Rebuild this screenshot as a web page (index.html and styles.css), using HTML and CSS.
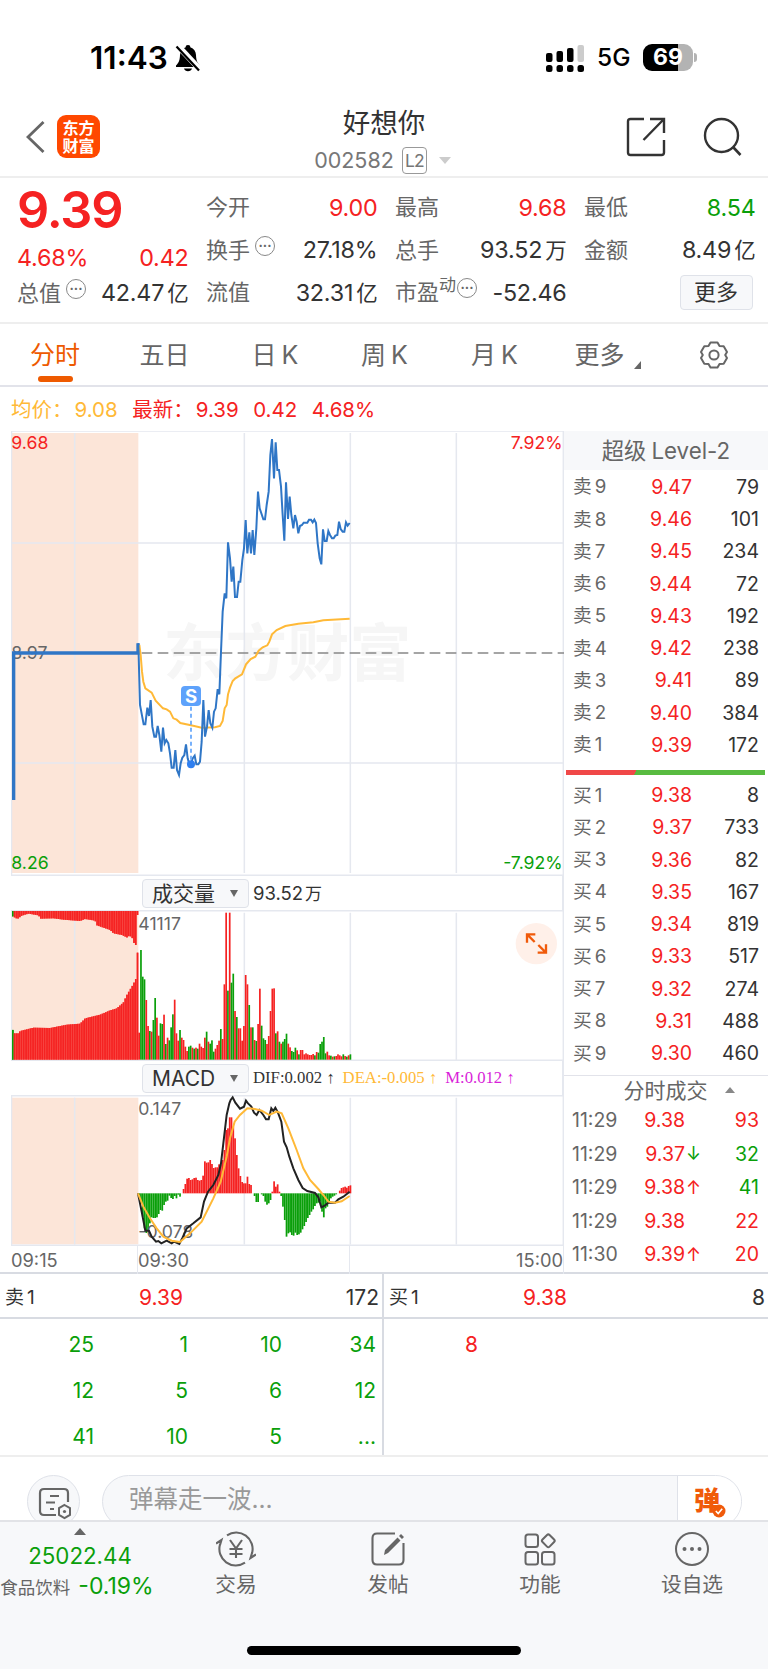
FILE: index.html
```html
<!DOCTYPE html>
<html lang="zh-CN">
<head>
	<meta charset="UTF-8">
	<title>好想你 002582</title>
	<link rel="stylesheet" href="styles.css">
</head>
<body>
	<!-- 状态栏 -->
	<div class="status">
		<b class="time">11:43</b>
		<svg class="bell" width="26" height="28" viewBox="0 0 26 28">
			<path d="M13 1c-1.600 0-2.300.9-2.300 2.200C7 4.300 5.200 7.200 5 11c-.2 5-1 7.500-4 10.500V23h24v-1.500c-3-3-3.800-5.500-4-10.500-.2-3.800-2-6.700-5.700-7.800C15.300 1.900 14.600 1 13 1zM9 24.500c.6 1.700 2 2.700 4 2.700s3.400-1 4-2.700z"/>
			<path d="M2 1l23.500 25" stroke="#fff" stroke-width="6"/>
			<path d="M1.500 2.500l22.500 24" stroke="#000" stroke-width="2.200"/>
		</svg>
		<svg class="signal" width="39" height="28" viewBox="0 0 39 28">
			<rect x="0" y="9" width="6.500" height="9" rx="2"/><rect x="10.500" y="7" width="6.500" height="11" rx="2"/>
			<rect x="21" y="4" width="6.500" height="14" rx="2"/><rect x="31.500" y="1" width="6.500" height="17" rx="2" fill="#ccc"/>
			<rect x="0" y="21" width="6.500" height="7" rx="2.500"/><rect x="10.500" y="21" width="6.500" height="7" rx="2.500"/>
			<rect x="21" y="21" width="6.500" height="7" rx="2.500"/><rect x="31.500" y="21" width="6.500" height="7" rx="2.500"/>
		</svg>
		<span class="net">5G</span>
		<span class="battery">69</span><i class="knob"></i>
	</div>

	<!-- 头部 -->
	<div class="header">
		<div class="header-left">
			<svg width="19" height="32" viewBox="0 0 19 32"><path d="M17.500 1L2 16l15.500 15" fill="none" stroke="#666" stroke-width="2.800"/></svg>
			<div class="logo">东方<br>财富</div>
		</div>
		<div class="header-title">
			<h1>好想你</h1>
			<p>002582<span class="l2">L2</span><i class="caret"></i></p>
		</div>
		<div class="header-right">
			<svg width="40" height="40" viewBox="0 0 40 40"><path d="M18 2H4.500Q2 2 2 4.500v31Q2 38 4.500 38h31Q38 38 38 35.500V23M24 2h14v14M38 2L17.500 23" fill="none" stroke="#333" stroke-width="2.400"/></svg>
			<svg width="40" height="40" viewBox="0 0 40 40"><circle cx="18.500" cy="18.500" r="16.500" fill="none" stroke="#333" stroke-width="2.400"/><path d="M30 30l7.500 8" stroke="#333" stroke-width="2.600"/></svg>
		</div>
	</div>

	<!-- 行情 -->
	<div class="quote">
		<div class="quote-col first">
			<div class="price">9.39</div>
			<div class="row red"><span>4.68%</span><span>0.42</span></div>
			<div class="row"><label>总值<i class="tip">···</i></label><span>42.47<em>亿</em></span></div>
		</div>
		<div class="quote-col">
			<div class="row"><label>今开</label><span class="red">9.00</span></div>
			<div class="row"><label>换手<i class="tip">···</i></label><span>27.18%</span></div>
			<div class="row"><label>流值</label><span>32.31<em>亿</em></span></div>
		</div>
		<div class="quote-col">
			<div class="row"><label>最高</label><span class="red">9.68</span></div>
			<div class="row"><label>总手</label><span>93.52<em>万</em></span></div>
			<div class="row"><label>市盈<sup>动</sup><i class="tip near">···</i></label><span>-52.46</span></div>
		</div>
		<div class="quote-col">
			<div class="row"><label>最低</label><span class="green">8.54</span></div>
			<div class="row"><label>金额</label><span>8.49<em>亿</em></span></div>
			<div class="row end"><button class="more">更多</button></div>
		</div>
	</div>

	<!-- 周期切换 -->
	<div class="tabs">
		<div class="tab active">分时</div>
		<div class="tab">五日</div>
		<div class="tab">日<s></s>K</div>
		<div class="tab">周<s></s>K</div>
		<div class="tab">月<s></s>K</div>
		<div class="tab">更多<i class="corner"></i></div>
		<div class="tab gear">
			<svg width="30" height="28" viewBox="0 0 30 28"><path d="M11.500 1.500h7l2 3.500 4.200.3L28 11l-1.800 3L28 17l-3.300 5.700-4.200.3-2 3.500h-7l-2-3.500-4.200-.3L2 17l1.800-3L2 11l3.300-5.700 4.200-.3z" fill="none" stroke="#666" stroke-width="2" stroke-linejoin="round"/><circle cx="15" cy="14" r="4.600" fill="none" stroke="#666" stroke-width="2"/></svg>
		</div>
	</div>

	<div class="legend">
		<span class="orange">均价：</span><span class="orange">9.08</span>
		<span class="red">最新：</span><span class="red">9.39</span><span class="red">0.42</span><span class="red">4.68%</span>
	</div>

	<div class="main">
		<div class="charts">
			<!-- 分时图 -->
			<svg class="chart" width="553" height="445" viewBox="33 18 1659 1335">
				<rect x="36" y="24" width="379" height="1320" fill="#fce5d8"/>
				<text class="mark" x="490" y="753">东方财富</text>
				<path class="grid" d="M34.500 18v1335M224 24v1320M733 24v1320M1051 24v1320M1369 24v1320M1690 18v1335M33 18h1659M33 354h1659M33 1014h1659M33 1351h1659"/>
				<path d="M425 684h1267" stroke="#888" stroke-width="5" stroke-dasharray="32 16"/>
				<text class="t-gray" x="34" y="701">8.97</text>
				<path d="M41 1125V684H414V655" fill="none" stroke="#2f76c6" stroke-width="10"/>
				<polyline class="avg" points="418,660 422,690 426,740 430,770 436,790 455,803 467,827 489,850 500,853 510,860 520,880 530,884 541,894 573,901 605,908 645,907 660,903 668,888 674,850 680,840 684,808 690,788 698,768 706,760 726,748 738,718 752,702 766,695 776,677 788,667 802,661 808,650 816,628 830,615 856,603 895,596 940,592 970,586 1049,581"/>
				<polyline class="now" points="415,655 420,840 431,898 436,898 442,848 447,873 452,825 457,905 463,935 468,935 473,903 478,930 484,980 489,908 494,955 499,945 505,955 510,985 515,1028 521,1028 526,975 531,1035 537,1050 542,1015 547,998 553,990 558,958 563,1000 568,1018 573,1018 578,1000 584,992 589,1018 595,1018 600,1010 605,950 610,825 615,935 621,905 626,855 631,895 637,908 642,860 647,850 653,792 658,808 663,680 668,560 674,505 679,520 684,352 690,400 695,470 700,425 705,516 711,516 716,470 721,470 727,405 732,370 737,285 742,385 748,322 753,385 758,315 763,390 769,310 774,200 779,250 790,283 795,283 800,240 806,200 811,90 816,42 822,160 827,52 832,135 837,135 843,185 848,270 853,347 858,172 864,282 869,215 874,270 880,310 885,270 890,290 895,325 900,303 906,300 911,293 922,293 927,284 933,284 938,292 943,284 948,294 953,355 959,400 964,418 969,313 974,348 980,348 985,318 990,330 996,340 1001,340 1006,332 1012,330 1017,290 1022,312 1028,320 1033,320 1038,292 1043,302 1049,294"/>
				<path d="M573 845V1010" stroke="#5ea2fb" stroke-width="5" stroke-dasharray="12 9"/>
				<circle cx="573" cy="1018" r="12" fill="#2f7ff0"/>
				<rect x="543" y="783" width="60" height="60" rx="12" fill="#5ea2fb"/>
				<text class="sell" x="573" y="833">S</text>
				<text class="t-red" x="34" y="71">9.68</text>
				<text class="t-red" x="1688" y="71" text-anchor="end">7.92%</text>
				<text class="t-green" x="34" y="1331">8.26</text>
				<text class="t-green" x="1688" y="1331" text-anchor="end">-7.92%</text>
			</svg>
			<div class="bar"><span class="select">成交量<i></i></span><span class="vol">93.52<em>万</em></span></div>
			<!-- 成交量 -->
			<svg class="chart" width="553" height="151" viewBox="33 120 1659 453">
				<rect x="36" y="123" width="379" height="446" fill="#fce5d8"/>
				<path class="grid" d="M34.500 120v453M224 128v441M733 128v441M1051 128v441M1369 128v441M1690 120v453M33 122h1659M33 571h1659"/>
				<g id="auction"></g>
				<g id="volume"></g>
				<text class="t-gray" x="415" y="180">41117</text>
				<circle cx="1609" cy="221" r="62" fill="#fff0e9"/>
				<path d="M1581 218v-25h25M1582 194l22 22M1613 248h25v-25M1637 247l-22-22" fill="none" stroke="#f05a0a" stroke-width="7"/>
			</svg>
			<div class="bar"><span class="select">MACD<i></i></span><span class="serif">DIF:0.002 ↑</span><span class="serif orange">DEA:-0.005 ↑</span><span class="serif purple">M:0.012 ↑</span></div>
			<!-- MACD -->
			<svg class="chart" width="553" height="151" viewBox="33 105 1659 453">
				<rect x="36" y="113" width="379" height="440" fill="#fce5d8"/>
				<path class="grid" d="M34.500 105v453M224 113v440M733 113v440M1051 113v440M1369 113v440M1690 105v453M33 107h1659M33 556h1659"/>
				<g id="macd"></g>
				<text class="t-gray" x="415" y="165">0.147</text>
				<text class="t-gray" x="415" y="535">-0.078</text>
				<polyline class="dif" points="414,400 425,455 436,512 447,512 455,530 468,545 475,543 484,550 500,542 515,550 522,545 538,552 548,532 560,505 580,490 602,472 612,425 624,395 640,375 655,345 663,310 670,250 680,165 688,130 692,120 698,112 706,128 720,146 732,140 738,122 744,130 754,140 762,158 770,165 778,150 790,165 798,178 806,178 814,145 820,153 826,143 834,158 844,185 852,245 860,262 868,290 880,325 895,360 908,384 922,393 945,399 955,412 964,442 975,436 985,428 1005,428 1015,418 1030,410 1049,395"/>
				<polyline class="avg" points="414,400 430,440 450,475 470,505 490,530 515,542 540,546 570,520 605,485 640,415 662,365 680,290 690,235 704,185 720,165 742,145 760,146 785,152 808,165 830,155 845,160 865,205 890,270 910,325 930,360 955,387 970,405 985,425 1005,428 1025,424 1049,408"/>
			</svg>
			<div class="axis"><span>09:15</span><span>09:30</span><span>15:00</span></div>
		</div>

		<!-- 盘口 -->
		<div class="book">
			<div class="book-title">超级<s></s>Level-2</div>
			<ul class="level">
				<li><label>卖9</label><b>9.47</b><span>79</span></li>
				<li><label>卖8</label><b>9.46</b><span>101</span></li>
				<li><label>卖7</label><b>9.45</b><span>234</span></li>
				<li><label>卖6</label><b>9.44</b><span>72</span></li>
				<li><label>卖5</label><b>9.43</b><span>192</span></li>
				<li><label>卖4</label><b>9.42</b><span>238</span></li>
				<li><label>卖3</label><b>9.41</b><span>89</span></li>
				<li><label>卖2</label><b>9.40</b><span>384</span></li>
				<li><label>卖1</label><b>9.39</b><span>172</span></li>
			</ul>
			<div class="ratio"></div>
			<ul class="level">
				<li><label>买1</label><b>9.38</b><span>8</span></li>
				<li><label>买2</label><b>9.37</b><span>733</span></li>
				<li><label>买3</label><b>9.36</b><span>82</span></li>
				<li><label>买4</label><b>9.35</b><span>167</span></li>
				<li><label>买5</label><b>9.34</b><span>819</span></li>
				<li><label>买6</label><b>9.33</b><span>517</span></li>
				<li><label>买7</label><b>9.32</b><span>274</span></li>
				<li><label>买8</label><b>9.31</b><span>488</span></li>
				<li><label>买9</label><b>9.30</b><span>460</span></li>
			</ul>
			<div class="deal-title">分时成交<i></i></div>
			<ul class="deal">
				<li><label>11:29</label><b>9.38</b><i></i><span class="red">93</span></li>
				<li><label>11:29</label><b>9.37</b><i class="green">↓</i><span class="green">32</span></li>
				<li><label>11:29</label><b>9.38</b><i class="red">↑</i><span class="green">41</span></li>
				<li><label>11:29</label><b>9.38</b><i></i><span class="red">22</span></li>
				<li><label>11:30</label><b>9.39</b><i class="red">↑</i><span class="red">20</span></li>
			</ul>
		</div>
	</div>

	<!-- 委托队列 -->
	<div class="queue">
		<div class="queue-side">
			<div class="queue-head"><label>卖1</label><b>9.39</b><span>172</span></div>
			<div class="queue-list green">
				<span>25</span><span>1</span><span>10</span><span>34</span>
				<span>12</span><span>5</span><span>6</span><span>12</span>
				<span>41</span><span>10</span><span>5</span><span>...</span>
			</div>
		</div>
		<div class="queue-side">
			<div class="queue-head"><label>买1</label><b>9.38</b><span>8</span></div>
			<div class="queue-list red"><span>8</span></div>
		</div>
	</div>

	<!-- 弹幕 -->
	<div class="danmu">
		<div class="danmu-set">
			<svg width="34" height="34" viewBox="0 0 34 34"><path d="M18 28H6q-4 0-4-4V6q0-4 4-4h20q4 0 4 4v9M12 9h9M8 15.500h9M12 22h4" fill="none" stroke="#666" stroke-width="2.200"/><path d="M26.500 18l5.500 3.200v6.600L26.500 31 21 27.800v-6.600z" fill="none" stroke="#666" stroke-width="2"/><circle cx="26.500" cy="24.500" r="1.600" fill="#666"/></svg>
		</div>
		<div class="danmu-input">
			<span>弹幕走一波...</span>
			<div class="danmu-btn">弹<svg width="14" height="14" viewBox="0 0 14 14"><circle cx="7" cy="7" r="6.500" fill="#f05a0a"/><path d="M3.800 7l2.400 2.500 4-4.700" fill="none" stroke="#fff" stroke-width="1.600"/></svg></div>
		</div>
	</div>

	<!-- 底部导航 -->
	<div class="nav">
		<div class="index">
			<i class="up"></i>
			<p class="green">25022.44</p>
			<p class="green"><label>食品饮料</label>-0.19%</p>
		</div>
		<div class="nav-item">
			<svg width="40" height="36" viewBox="0 0 40 36"><path d="M11 4.300A16.500 16.500 0 0 1 36 22.500M29 31.700A16.500 16.500 0 0 1 4 13.500M0 12.500L5.500 9 4 14M40 23.500L34.500 27 36 22M14 9l6 8.500L26 9M20 17v10M13.500 18h13M13.500 23h13" fill="none" stroke="#666" stroke-width="2.100"/></svg>
			<span>交易</span>
		</div>
		<div class="nav-item">
			<svg width="40" height="36" viewBox="0 0 40 36"><path d="M27 2.500H9q-4.500 0-4.500 4.500v22q0 4.500 4.500 4.500h22q4.500 0 4.500-4.500V12" fill="none" stroke="#666" stroke-width="2.100"/><path d="M16 24l1-5L29.500 6.500l3 3L20 22zM31 5l2-2 3 3-2 2z" fill="#666"/></svg>
			<span>发帖</span>
		</div>
		<div class="nav-item">
			<svg width="40" height="36" viewBox="0 0 40 36"><g fill="none" stroke="#666" stroke-width="2"><rect x="5.500" y="3.500" width="12.500" height="12.500" rx="2.500"/><rect x="5.500" y="21" width="12.500" height="12.500" rx="2.500"/><rect x="22" y="21" width="12.500" height="12.500" rx="2.500"/><rect x="23.300" y="4.800" width="10" height="10" rx="1.800" transform="rotate(45 28.300 9.800)"/></g></svg>
			<span>功能</span>
		</div>
		<div class="nav-item">
			<svg width="40" height="36" viewBox="0 0 40 36"><circle cx="20" cy="18" r="16" fill="none" stroke="#666" stroke-width="2"/><g fill="#666"><circle cx="12.500" cy="18" r="2"/><circle cx="20" cy="18" r="2"/><circle cx="27.500" cy="18" r="2"/></g></svg>
			<span>设自选</span>
		</div>
	</div>
	<div class="home"><i></i></div>

	<script src="main.js"></script>
</body>
</html>
```

FILE: styles.css
```css
*{
	margin: 0;
	padding: 0;
	box-sizing: border-box;
}
body {
	width: 768px;
	height: 1669px;
	overflow: hidden;
	background: #fff;
	color: #333;
	font-family: Inter, "Noto Sans CJK SC", sans-serif;
	font-size: 22px;
	line-height: 1;
}
ul{
	list-style: none;
}
i, em{
	font-style: normal;
}
s{
	display: inline-block;
	width: 5px;
}
.red{
	color: #f52222;
}
.green{
	color: #0a9f0a;
}
.orange{
	color: #ffb937;
}
.purple{
	color: #d91fd9;
}

/* 状态栏 */
.status{
	display: flex;
	align-items: center;
	height: 100px;
	padding: 15px 0 0 90px;
	color: #000;
}
.time{
	width: 85px;
	font-size: 31.5px;
	font-weight: 600;
}
.signal{
	margin-left: 345px;
}
.net{
	width: 46px;
	margin-left: 12px;
	font-size: 24.5px;
	font-weight: 500;
}
.battery{
	width: 50px;
	height: 27px;
	border-radius: 9px;
	background: linear-gradient(90deg, #000 69%, #b3b3b3 69%);
	color: #fff;
	font-size: 23px;
	font-weight: 700;
	line-height: 27px;
	text-align: center;
}
.knob{
	width: 3px;
	height: 9px;
	margin-left: 1px;
	border-radius: 0 3px 3px 0;
	background: #b3b3b3;
}

/* 头部 */
.header{
	display: grid;
	grid-template-columns: 1fr 200px 1fr;
	height: 78px;
	border-bottom: 2px solid #eee;
}
.header-left{
	display: flex;
	align-items: center;
	gap: 12px;
	padding: 0 0 3px 26px;
}
.logo{
	width: 43px;
	height: 43px;
	padding-top: 4px;
	border-radius: 9px;
	background: #ff4800;
	color: #fff;
	font-size: 16px;
	font-weight: 700;
	line-height: 18px;
	text-align: center;
}
.header-title{
	padding-top: 8px;
	text-align: center;
}
.header-title h1{
	font-size: 27.5px;
	font-weight: 400;
	line-height: 30px;
}
.header-title p{
	display: flex;
	align-items: center;
	justify-content: center;
	height: 27px;
	margin: 9px 3px 0 0;
	color: #777;
	font-size: 21.5px;
}
.l2{
	width: 25px;
	height: 27px;
	margin: 0 12px 0 8px;
	border: 1.5px solid #999;
	border-radius: 4px;
	font-size: 17.5px;
	letter-spacing: -1px;
	line-height: 25px;
}
.caret{
	border: 6px solid transparent;
	border-top: 7px solid #ccc;
	border-bottom: 0;
}
.header-right{
	display: flex;
	align-items: center;
	justify-content: flex-end;
	gap: 37px;
	padding: 0 25px 2px 0;
}

/* 行情 */
.quote{
	display: grid;
	grid-template-columns: repeat(4, 171.5px);
	gap: 17.500px;
	height: 146px;
	padding: 8px 0 0 17px;
	border-bottom: 2px solid #eee;
}
.row{
	display: flex;
	align-items: center;
	justify-content: space-between;
	height: 42.500px;
	white-space: nowrap;
}
.quote .row > span{
	font-size: 23.3px;
	letter-spacing: -0.2px;
}
.row label{
	display: flex;
	color: #666;
	font-size: 22px;
}
.row em{
	margin-left: 3px;
	font-size: 21.5px;
}
.row sup{
	margin-top: -4px;
	font-size: 17px;
	vertical-align: top;
}
.row.end{
	justify-content: flex-end;
}
.first .row:last-child{
	height: 28px;
}
.price{
	height: 50px;
	color: #f52222;
	font-size: 50.5px;
	font-weight: 600;
	line-height: 48px;
	letter-spacing: -1.2px;
}
.tip{
	width: 20px;
	height: 20px;
	margin: -3px 0 0 5px;
	border: 1.5px solid #888;
	border-radius: 50%;
	font-size: 13px;
	font-weight: 700;
	line-height: 17px;
	text-align: center;
}
.tip.near{
	margin-left: 1px;
}
.more{
	width: 73px;
	height: 35px;
	margin-right: 3px;
	border: 1.5px solid #dfe2e9;
	border-radius: 4px;
	background: #f7f8fa;
	color: #333;
	font: 22px/30px Inter, "Noto Sans CJK SC", sans-serif;
}

/* 周期 */
.tabs{
	display: grid;
	grid-template-columns: 110px 109px 112px 107px 113px 112px 105px;
	height: 63px;
	border-bottom: 2px solid #e2e3ea;
}
.tab{
	position: relative;
	color: #666;
	font-size: 25px;
	line-height: 62px;
	text-align: center;
}
.active{
	color: #ee5a00;
}
.active::after{
	content: "";
	position: absolute;
	left: 38px;
	bottom: 4px;
	width: 35px;
	height: 6px;
	border-radius: 3px;
	background: #ee5a00;
}
.corner{
	position: absolute;
	right: 22px;
	bottom: 17px;
	border-left: 7px solid transparent;
	border-bottom: 8px solid #666;
}
.tab:nth-child(6){
	padding-right: 15px;
}
.gear svg{
	vertical-align: middle;
	margin: -5px 0 0 -3px;
}
.legend{
	display: flex;
	gap: 14.5px;
	height: 44px;
	padding-left: 11px;
	font-size: 20.5px;
	line-height: 45px;
}
.legend span:nth-child(odd):nth-child(-n+3){
	width: 49px;
	white-space: nowrap;
}

/* 图表 */
.main{
	display: flex;
	height: 843px;
	border-bottom: 2px solid #d8dbe2;
}
.charts{
	width: 564px;
	padding-left: 11px;
}
.chart{
	display: block;
}
.chart text{
	font-size: 53px;
}
.grid{
	fill: none;
	stroke: #e5e8ef;
	stroke-width: 4.5;
}
.now, .avg, .dif{
	fill: none;
	stroke: #2f76c6;
	stroke-width: 6;
}
.avg{
	stroke: #ffb937;
}
.dif{
	stroke: #222;
}
.chart .t-red{
	fill: #f52222;
}
.chart .t-green{
	fill: #0a9f0a;
}
.chart .t-gray{
	fill: #666;
}
.chart .mark{
	fill: #f6f6f6;
	font-size: 186px;
	font-weight: 700;
}
.chart .sell{
	fill: #fff;
	font-size: 56px;
	font-weight: 700;
	text-anchor: middle;
}
.bar{
	display: flex;
	align-items: center;
	height: 34px;
	padding-left: 131px;
	border-right: 2px solid #e5e8ef;
	white-space: nowrap;
}
.select{
	display: flex;
	align-items: center;
	justify-content: space-between;
	width: 107px;
	height: 29px;
	margin-right: 4px;
	padding: 0 10px 0 9px;
	border: 1.5px solid #dfe2e9;
	border-radius: 4px;
	background: #f7f8fa;
	font-size: 21px;
}
.select i{
	border: 4px solid transparent;
	border-top: 7px solid #666;
	border-bottom: 0;
}
.vol{
	font-size: 18.5px;
}
.vol em{
	margin-left: 2px;
	font-size: 17px;
}
.serif{
	margin-right: 8px;
	font-family: "Liberation Serif", serif;
	font-size: 16.7px;
}
.axis{
	display: grid;
	grid-template-columns: 127px 212px 214px;
	height: 26px;
	color: #666;
	font-size: 18.3px;
	line-height: 28px;
}
.axis span{
	border-right: 1.5px solid #e5e8ef;
}
.axis span:last-child{
	text-align: right;
}

/* 盘口 */
.book{
	width: 204px;
}
.book-title{
	height: 39px;
	background: #f7f8fa;
	color: #666;
	font-size: 22.3px;
	line-height: 40px;
	text-align: center;
}
.book-title + .level{
	padding-top: 1.500px;
}
.level li{
	display: flex;
	align-items: center;
	height: 32.250px;
	padding: 0 9px 0 9px;
	font-size: 19.5px;
}
.level label{
	width: 59px;
	color: #666;
	font-size: 18.7px;
	letter-spacing: 3px;
}
.book b, .queue b{
	width: 60px;
	color: #f52222;
	font-weight: 400;
	text-align: right;
}
.book li span{
	flex: 1;
	text-align: right;
}
.ratio{
	height: 5px;
	margin: 8px 3px 5px 2px;
	background: linear-gradient(120deg, #f04848 35%, #58bb40 35%);
}
.level + .deal-title{
	height: 29px;
	margin-top: 5px;
	border-top: 1.5px solid #e2e3ea;
}
.deal-title{
	display: flex;
	align-items: center;
	justify-content: center;
	gap: 17px;
	padding-left: 38px;
	padding-right: 12px;
	color: #666;
	font-size: 21px;
}
.deal-title i{
	border: 5px solid transparent;
	border-bottom: 6px solid #888;
	border-top: 0;
}
.deal li{
	display: flex;
	align-items: center;
	height: 33.500px;
	padding: 0 9px 0 8px;
	font-size: 19.5px;
}
.deal label{
	width: 53px;
	color: #666;
	font-size: 19.5px;
}
.book .deal b{
	width: 61px;
	padding-right: 1px;
}
.deal i{
	width: 14px;
	font-size: 18px;
}

/* 委托队列 */
.queue{
	display: flex;
	height: 183px;
	border-bottom: 2px solid #eee;
}
.queue-side{
	width: 384px;
}
.queue-side:first-child{
	border-right: 2px solid #d8dbe2;
}
.queue-head{
	display: flex;
	align-items: center;
	height: 45px;
	padding: 4px 3px 0 5px;
	border-bottom: 2px solid #d8dbe2;
	font-size: 21px;
}
.queue-head label{
	width: 118px;
	font-size: 19px;
	letter-spacing: 3px;
}
.queue-head span{
	flex: 1;
	text-align: right;
}
.queue-list{
	display: grid;
	grid-template-columns: repeat(4, 94px);
	grid-auto-rows: 46px;
	padding-top: 3px;
	font-size: 21px;
	line-height: 46px;
	text-align: right;
}

/* 弹幕 */
.danmu{
	display: flex;
	gap: 22px;
	height: 63px;
	padding: 18px 0 0 27px;
	overflow: hidden;
}
.danmu-set, .danmu-input{
	height: 53px;
	border: 1.5px solid #dfe2e9;
	border-radius: 27px;
	background: #f7f8fa;
}
.danmu-set{
	width: 53px;
	padding: 11px 0 0 10px;
}
.danmu-input{
	display: flex;
	justify-content: space-between;
	width: 640px;
	padding-left: 26px;
	overflow: hidden;
	color: #999;
	font-size: 24.5px;
	line-height: 47px;
}
.danmu-btn{
	position: relative;
	width: 64px;
	padding-left: 16px;
	border-left: 1.5px solid #dfe2e9;
	background: #fff;
	color: #f05a0a;
	font-size: 26px;
	font-weight: 900;
	line-height: 50px;
}
.danmu-btn svg{
	position: absolute;
	left: 34px;
	top: 28px;
}

/* 底部 */
.nav{
	display: grid;
	grid-template-columns: 160px repeat(4, 152px);
	height: 90px;
	border-top: 2px solid #e2e3e7;
	background: #f7f8fa;
}
.nav-item{
	display: flex;
	flex-direction: column;
	align-items: center;
	padding-top: 9px;
	color: #666;
	font-size: 20.7px;
}
.nav-item span{
	margin-top: 8px;
}
.index{
	display: flex;
	flex-direction: column;
	align-items: center;
	padding-top: 6px;
	font-size: 22.3px;
	white-space: nowrap;
}
.index p{
	margin-top: 9px;
	line-height: 23px;
}
.index p + p{
	margin: 8px 0 0 -6px;
	font-size: 23px;
}
.index label{
	margin-right: 8px;
	color: #666;
	font-size: 17.500px;
}
.up{
	border: 6px solid transparent;
	border-bottom: 7px solid #666;
	border-top: 0;
}
.home{
	height: 59px;
	padding-top: 36px;
	background: #f7f8fa;
}
.home i{
	display: block;
	width: 274px;
	height: 9px;
	margin: 0 auto;
	border-radius: 5px;
	background: #000;
}
```

FILE: main.js
```js
var RED = '#f52222';
var GREEN = '#0a9f0a';
var step = 5.325;

function rect(x, y1, y2, w, color) {
	var top = Math.min(y1, y2);
	return '<rect x="' + x + '" y="' + top + '" width="' + w + '" height="' + Math.abs(y2 - y1) + '" fill="' + color + '"/>';
}

// 按关键点取值
function valueAt(points, x) {
	for (var i = 1; i < points.length; i++) {
		if (x <= points[i][0]) {
			var a = points[i - 1], b = points[i];
			return a[1] + (b[1] - a[1]) * (x - a[0]) / (b[0] - a[0]);
		}
	}
	return points[points.length - 1][1];
}

// 集合竞价
var upper = [[36,138],[52,147],[65,137],[85,131],[115,136],[122,146],[160,145],[190,149],[240,153],[255,147],[285,152],[290,166],[310,173],[330,180],[340,190],[365,195],[382,203],[388,196],[397,205],[402,220],[409,227],[411,135],[416,135]];
var lower = [[36,473],[41,490],[55,490],[60,483],[100,473],[150,474],[200,464],[240,461],[255,445],[300,434],[330,421],[350,415],[370,397],[380,375],[398,345],[408,325],[410,248],[416,248]];
var html = '';
for (var x = 36; x < 414; x += 5.27) {
	var color = x === 36 ? GREEN : RED;
	var u = valueAt(upper, x + 2), l = valueAt(lower, x + 2);
	html += rect(x, 123, u, 5.3, x === 36 ? GREEN : '#f84a42') + rect(x, 123, u, 4.3, color);
	html += rect(x, l, 569, 5.3, x === 36 ? GREEN : '#f84a42') + rect(x, l, 569, 4.3, color);
}
document.getElementById('auction').innerHTML = html;

// 成交量，g 绿 r 红
var volume = ('488r 240g 320g 328g 390r 468r 483g 485r 450g 384g 443r 497r 460g 462g 434r 522g 503r 511g 472g 433g ' +
	'389r 490r 512r 480g 503r 510r 530r 543r 530g 527g 533r 536g 533r 536g 521r 530r 534r 503r 485g 515r ' +
	'521g 511g 545g 536r 525r 512r 477g 507r 343r 128r 362g 128r 338g 311g 423r 441g 475r 475r 512r 468r ' +
	'315r 343r 405g 472r 472g 510r 513g 462r 356r 467g 505g 510g 522r 498r 423r 356r 355r 490g 484r 515g ' +
	'521r 515g 507g 491g 521r 532r 543g 546g 533g 541r 553g 540r 540r 553r 550r 553r 555r 555r 552r 556g ' +
	'546r 548g 522g 515g 501g 550g 545r 556r 557g 560r 559g 558r 553r 556r 559r 553g 558r 560g 556r 553g 560r').split(' ');
html = '';
for (var i = 0; i < 120; i++) {
	html += rect(415 + i * step, parseInt(volume[i]), 569, 5.1, volume[i].slice(-1) === 'g' ? GREEN : RED);
}
document.getElementById('volume').innerHTML = html;

// MACD 柱
var macd = [405,430,470,505,519,510,490,472,474,474,472,462,450,452,435,425,422,407,414,417,408,415,404,410,400,
	387,372,356,354,360,358,354,353,360,362,360,347,304,308,307,300,312,324,322,322,313,313,300,270,210,205,172,172,200,
	235,285,325,348,366,370,370,350,372,375,400,408,426,426,400,403,408,425,434,430,420,395,364,380,373,395,408,440,480,
	530,520,517,525,527,518,525,523,518,508,498,486,474,465,455,448,438,430,428,425,455,472,445,440,425,415,410,407,403,
	400,392,384,382,380,383,378,376];
html = '';
for (i = 0; i < macd.length; i++) {
	html += rect(415 + i * step, macd[i], 400, 5.2, macd[i] > 400 ? GREEN : RED);
}
document.getElementById('macd').innerHTML = html;
```
